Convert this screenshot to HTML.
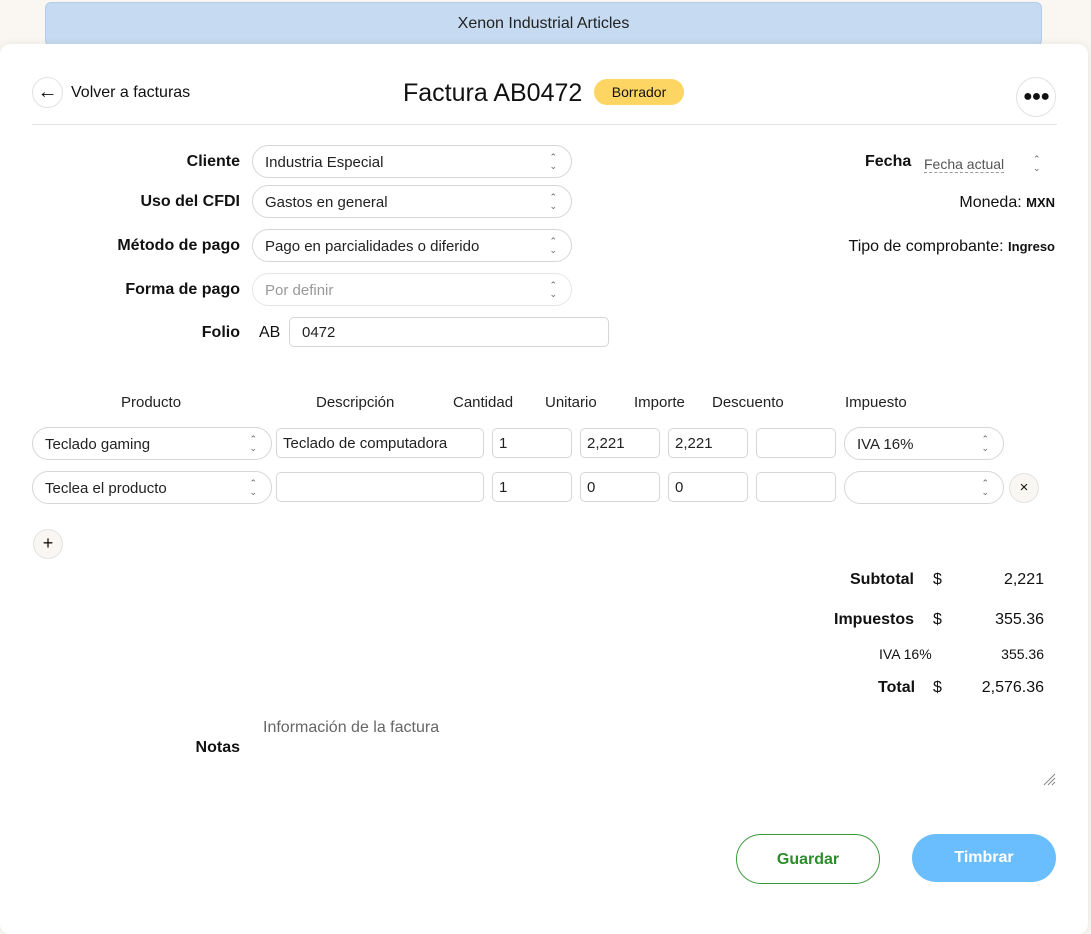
<!DOCTYPE html>
<html><head><meta charset="utf-8"><style>
*{box-sizing:border-box;margin:0;padding:0}
body{width:1091px;height:926px;background:#faf6f2;font-family:"Liberation Sans",sans-serif;color:#111;position:relative;overflow:hidden;font-size:15px}
.a{position:absolute}
.banner{left:45px;top:2px;width:997px;height:44px;background:#c6dbf1;border:1px solid #b3cbe6;border-radius:6px;text-align:center;line-height:42px;font-size:16px;color:#222}
.card{left:0;top:44px;width:1088px;height:890px;background:#fff;border-radius:10px;box-shadow:0 0 8px rgba(0,0,0,.08)}
.lbl{font-weight:bold;font-size:16px;text-align:right;width:200px;left:40px}
.sel{border:1px solid #d6d6d6;border-radius:17px;height:33px;font-size:15px;line-height:33px;padding-left:12px;color:#222}
.sel:after{content:"⌃\A⌄";white-space:pre;position:absolute;right:14px;top:7px;font-size:9px;line-height:9px;color:#666}
.inp{border:1px solid #d6d6d6;border-radius:5px;height:30px;font-size:15px;line-height:29px;padding-left:6px;color:#222}
.th{font-size:15px;color:#222;top:394px}
.circ{border:1px solid #e2e2e2;border-radius:50%;background:#fff;text-align:center}
.r{text-align:right}
</style></head><body>
<div class="a banner">Xenon Industrial Articles</div>
<div class="a card"></div>
<div class="a circ" style="left:32px;top:77px;width:31px;height:31px;line-height:28px;font-size:20px">←</div>
<div class="a" style="left:71px;top:84px;font-size:16px">Volver a facturas</div>
<div class="a" style="left:403px;top:79px;font-size:25px">Factura AB0472</div>
<div class="a" style="left:594px;top:79px;width:90px;height:26px;border-radius:13px;background:#fcd562;font-size:14px;text-align:center;line-height:26px">Borrador</div>
<div class="a circ" style="left:1016px;top:77px;width:40px;height:40px;line-height:38px;font-size:16px;font-weight:bold;letter-spacing:-1px">●●●</div>
<div class="a" style="left:32px;top:124px;width:1025px;height:1px;background:#e2e2e2"></div>

<div class="a lbl" style="top:153px">Cliente</div>
<div class="a sel" style="left:252px;top:145px;width:320px">Industria Especial</div>
<div class="a lbl" style="top:193px">Uso del CFDI</div>
<div class="a sel" style="left:252px;top:185px;width:320px">Gastos en general</div>
<div class="a lbl" style="top:237px">Método de pago</div>
<div class="a sel" style="left:252px;top:229px;width:320px">Pago en parcialidades o diferido</div>
<div class="a lbl" style="top:281px">Forma de pago</div>
<div class="a sel" style="left:252px;top:273px;width:320px;color:#999;border-color:#e6e6e6">Por definir</div>
<div class="a lbl" style="top:324px">Folio</div>
<div class="a" style="left:259px;top:324px;font-size:16px">AB</div>
<div class="a inp" style="left:289px;top:317px;width:320px;height:30px;padding-left:12px">0472</div>

<div class="a" style="left:865px;top:153px;font-size:16px;font-weight:bold">Fecha</div>
<div class="a" style="left:924px;top:156px;font-size:14px;color:#555;border-bottom:1px dashed #999;line-height:16px">Fecha actual</div>
<div class="a" style="left:1033px;top:155px;font-size:9px;line-height:9px;color:#666;white-space:pre">⌃
⌄</div>
<div class="a r" style="right:36px;top:194px;font-size:16px">Moneda: <b style="font-size:13px">MXN</b></div>
<div class="a r" style="right:36px;top:238px;font-size:16px">Tipo de comprobante: <b style="font-size:13px">Ingreso</b></div>

<div class="a th" style="left:121px">Producto</div>
<div class="a th" style="left:316px">Descripción</div>
<div class="a th" style="left:453px">Cantidad</div>
<div class="a th" style="left:545px">Unitario</div>
<div class="a th" style="left:634px">Importe</div>
<div class="a th" style="left:712px">Descuento</div>
<div class="a th" style="left:845px">Impuesto</div>

<div class="a sel" style="left:32px;top:427px;width:240px">Teclado gaming</div>
<div class="a inp" style="left:276px;top:428px;width:208px">Teclado de computadora</div>
<div class="a inp" style="left:492px;top:428px;width:80px">1</div>
<div class="a inp" style="left:580px;top:428px;width:80px">2,221</div>
<div class="a inp" style="left:668px;top:428px;width:80px">2,221</div>
<div class="a inp" style="left:756px;top:428px;width:80px"></div>
<div class="a sel" style="left:844px;top:427px;width:160px">IVA 16%</div>

<div class="a sel" style="left:32px;top:471px;width:240px">Teclea el producto</div>
<div class="a inp" style="left:276px;top:472px;width:208px"></div>
<div class="a inp" style="left:492px;top:472px;width:80px">1</div>
<div class="a inp" style="left:580px;top:472px;width:80px">0</div>
<div class="a inp" style="left:668px;top:472px;width:80px">0</div>
<div class="a inp" style="left:756px;top:472px;width:80px"></div>
<div class="a sel" style="left:844px;top:471px;width:160px"></div>
<div class="a circ" style="left:1009px;top:473px;width:30px;height:30px;line-height:28px;font-size:15px;background:#faf7f3">×</div>
<div class="a circ" style="left:33px;top:529px;width:30px;height:30px;line-height:27px;font-size:18px;background:#faf7f3">+</div>

<div class="a" style="left:850px;top:571px;font-size:16px;font-weight:bold">Subtotal</div>
<div class="a" style="left:933px;top:571px;font-size:16px">$</div>
<div class="a r" style="right:47px;top:571px;font-size:16px">2,221</div>
<div class="a" style="left:834px;top:611px;font-size:16px;font-weight:bold">Impuestos</div>
<div class="a" style="left:933px;top:611px;font-size:16px">$</div>
<div class="a r" style="right:47px;top:611px;font-size:16px">355.36</div>
<div class="a" style="left:879px;top:646px;font-size:14px">IVA 16%</div>
<div class="a r" style="right:47px;top:646px;font-size:14px">355.36</div>
<div class="a" style="left:878px;top:679px;font-size:16px;font-weight:bold">Total</div>
<div class="a" style="left:933px;top:679px;font-size:16px">$</div>
<div class="a r" style="right:47px;top:679px;font-size:16px">2,576.36</div>

<div class="a" style="left:263px;top:719px;font-size:16px;color:#666">Información de la factura</div>
<div class="a lbl" style="top:739px">Notas</div>
<svg class="a" style="left:1042px;top:772px" width="14" height="14"><path d="M2 13L13 2M6 13L13 6M10 13L13 10" stroke="#888" stroke-width="1"/></svg>

<div class="a" style="left:736px;top:834px;width:144px;height:50px;border:1px solid #3a9a3a;border-radius:25px;text-align:center;line-height:49px;color:#2c8c2c;font-weight:bold;font-size:16px">Guardar</div>
<div class="a" style="left:912px;top:834px;width:144px;height:48px;background:#6bbefd;border-radius:24px;text-align:center;line-height:48px;color:#fff;font-weight:bold;font-size:16px">Timbrar</div>
</body></html>
